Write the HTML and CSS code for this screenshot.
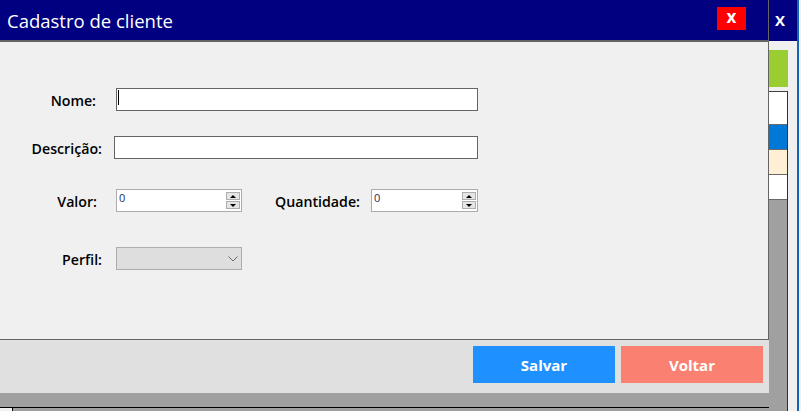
FILE: index.html
```html
<!DOCTYPE html>
<html lang="pt-BR">
<head>
<meta charset="utf-8">
<title>Cadastro de cliente</title>
<link rel="stylesheet" href="styles.css">
</head>
<body>
<div class="app">
  <div class="app-window">
    <div class="app-titlebar"><span class="app-close">X</span></div>
    <div class="app-content">
      <div class="app-toolbar"><div class="btn-green"></div></div>
      <div class="grid">
        <div class="grid-row grid-header"></div>
        <div class="grid-row grid-row-selected"></div>
        <div class="grid-row grid-row-alt"></div>
        <div class="grid-row"></div>
        <div class="grid-fill"></div>
        <div class="grid-bottom"><div class="grid-bottom-corner"></div></div>
      </div>
    </div>
  </div>

  <div class="dialog">
    <div class="dialog-title">
      <span class="dialog-title-text">Cadastro de cliente</span>
      <span class="dialog-close">x</span>
    </div>
    <div class="dialog-body">
      <div class="form-row row-nome">
        <label class="field-label lbl-nome">Nome:</label>
        <div class="textbox tb-nome"><span class="caret"></span></div>
      </div>
      <div class="form-row row-desc">
        <label class="field-label lbl-desc">Descrição:</label>
        <div class="textbox tb-desc"></div>
      </div>
      <div class="form-row row-valor">
        <label class="field-label lbl-valor">Valor:</label>
        <div class="numeric num-valor">
          <span class="numeric-value">0</span>
          <span class="spinner">
            <span class="spin-btn"><span class="arrow-up"></span></span>
            <span class="spin-btn"><span class="arrow-down"></span></span>
          </span>
        </div>
        <label class="field-label lbl-qtd">Quantidade:</label>
        <div class="numeric num-qtd">
          <span class="numeric-value">0</span>
          <span class="spinner">
            <span class="spin-btn"><span class="arrow-up"></span></span>
            <span class="spin-btn"><span class="arrow-down"></span></span>
          </span>
        </div>
      </div>
      <div class="form-row row-perfil">
        <label class="field-label lbl-perfil">Perfil:</label>
        <div class="combo">
          <svg class="combo-chevron" width="10" height="6" viewBox="0 0 10 6"><path d="M0.5 0.5 L5 5 L9.5 0.5" fill="none" stroke="#6a6a6a" stroke-width="1"/></svg>
        </div>
      </div>
    </div>
    <div class="dialog-footer">
      <button class="btn btn-save">Salvar</button>
      <button class="btn btn-back">Voltar</button>
    </div>
  </div>
</div>
</body>
</html>
```

FILE: styles.css
```css
* { box-sizing: border-box; }

html, body {
  margin: 0;
  padding: 0;
  background: #f0f0f0;
  font-family: "Open Sans", "Noto Sans", sans-serif;
}

.app {
  position: relative;
  width: 801px;
  height: 411px;
  overflow: hidden;
}

/* background window */
.app-window {
  width: 799px;
  height: 411px;
  border-right: 2px solid #1464b4;
  display: flex;
  flex-direction: column;
}

.app-titlebar {
  height: 41px;
  background: #000080;
  display: flex;
  align-items: center;
  justify-content: flex-end;
  padding-right: 12px;
  padding-bottom: 2px;
}

.app-close {
  color: #fff;
  font-weight: 700;
  font-size: 15px;
}

.app-content {
  flex: 1;
  display: flex;
  flex-direction: column;
  background: #f0f0f0;
  padding-right: 9px;
}

.app-toolbar {
  display: flex;
  justify-content: flex-end;
  padding-top: 9px;
  margin-bottom: 4px;
}

.btn-green {
  width: 140px;
  height: 37px;
  background: #9acd32;
}

.grid {
  flex: 1;
  display: flex;
  flex-direction: column;
  background: #a0a0a0;
  border-top: 1px solid #404040;
  border-right: 1px solid #303030;
}

.grid-row {
  height: 25px;
  background: #fff;
  border-bottom: 1px solid #696969;
}

.grid-header { height: 33px; }
.grid-row-selected { background: #0078d7; }
.grid-row-alt { background: #ffefd5; }

.grid-fill { flex: 1; }

.grid-bottom {
  width: 769px;
  height: 4px;
  border-top: 1px solid #000;
}

.grid-bottom-corner {
  width: 13px;
  height: 3px;
  background: #f0f0f0;
  border-right: 1px solid #000;
}

/* dialog window */
.dialog {
  position: absolute;
  top: 0;
  left: 0;
  width: 769px;
  display: flex;
  flex-direction: column;
}

.dialog-title {
  height: 42px;
  background: #000080;
  border-bottom: 2px solid #646464;
  border-right: 1px solid #646464;
  display: flex;
  align-items: center;
  padding-left: 7px;
}

.dialog-title-text {
  color: #fff;
  font-size: 18.5px;
}

.dialog-close {
  margin-left: auto;
  margin-right: 22px;
  align-self: flex-start;
  margin-top: 7px;
  width: 29px;
  height: 23px;
  background: #ff0000;
  color: #fff;
  font-weight: 700;
  font-size: 17px;
  line-height: 20px;
  text-align: center;
}

.dialog-body {
  height: 298px;
  background: #f0f0f0;
  border-bottom: 1px solid #646464;
  border-right: 1px solid #646464;
  padding-top: 46px;
  display: flex;
  flex-direction: column;
}

.form-row {
  display: flex;
  align-items: center;
  height: 23px;
}

.row-desc { margin-top: 25px; }
.row-valor { margin-top: 30px; }
.row-perfil { margin-top: 35px; }

.field-label {
  font-size: 14.2px;
  font-weight: 600;
  color: #000;
  text-align: right;
  flex: none;
  padding-top: 1px;
}

.lbl-nome { width: 96px; }
.lbl-desc { width: 102px; }
.lbl-valor { width: 97px; }
.lbl-qtd { width: 118px; }
.lbl-perfil { width: 102px; }

.textbox {
  height: 23px;
  background: #fff;
  border: 1px solid #646464;
  padding: 1px 0 0 1px;
}

.tb-nome { margin-left: 20px; width: 362px; }
.tb-desc { margin-left: 12px; width: 364px; }

.caret {
  display: block;
  width: 1px;
  height: 15px;
  background: #000;
}

.numeric {
  height: 23px;
  background: #fff;
  border: 1px solid #acacac;
  display: flex;
  align-items: flex-start;
  padding-left: 2px;
}

.num-valor { margin-left: 19px; width: 126px; }
.num-qtd { margin-left: 11px; width: 107px; }

.numeric-value {
  flex: 1;
  font-size: 11px;
  line-height: 15px;
  color: #1c2c5c;
}

.spinner {
  display: flex;
  flex-direction: column;
  gap: 1px;
  width: 14px;
  margin-top: 2px;
  margin-right: 1px;
}

.spin-btn {
  height: 8px;
  background: #e5e5e5;
  border: 1px solid #adadad;
  display: flex;
  align-items: center;
  justify-content: center;
}

.arrow-up {
  width: 0;
  height: 0;
  border-left: 3px solid transparent;
  border-right: 3px solid transparent;
  border-bottom: 3px solid #000;
}

.arrow-down {
  width: 0;
  height: 0;
  border-left: 3px solid transparent;
  border-right: 3px solid transparent;
  border-top: 3px solid #000;
}

.combo {
  margin-left: 14px;
  width: 126px;
  height: 23px;
  background: #dedede;
  border: 1px solid #adadad;
  display: flex;
  align-items: center;
  justify-content: flex-end;
  padding-right: 3px;
}

.combo-chevron { display: block; margin-top: 1px; }

.dialog-footer {
  height: 53px;
  background: #e0e0e0;
  display: flex;
  justify-content: flex-end;
  align-items: flex-start;
  gap: 6px;
  padding: 6px 6px 0 0;
}

.btn {
  width: 142px;
  height: 37px;
  border: none;
  color: #fff;
  font-family: "Open Sans", "Noto Sans", sans-serif;
  font-weight: 700;
  font-size: 15px;
  padding: 0;
}

.btn-save { background: #1e90ff; }
.btn-back { background: #fa8072; }
```
